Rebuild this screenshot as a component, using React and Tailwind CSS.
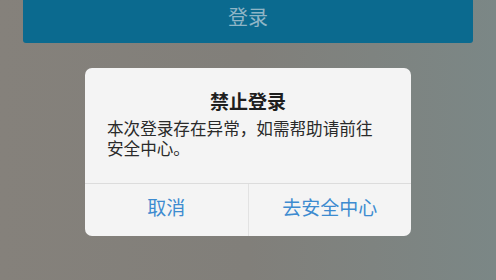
export default function App() {
  return (
    <div
      className="w-[496px] h-[280px] overflow-hidden flex flex-col bg-gradient-to-r from-[#85817b] via-[#817f7a] to-[#7b8786]"
      style={{ fontFamily: '"Noto Sans CJK SC", "Noto Sans", sans-serif' }}
    >
      <div className="px-[23px]">
        <button className="w-full h-[43px] bg-[#0b6a8f] rounded-b-[3px] text-[20px] leading-[20px] text-[#8fb5c6] pb-[16px] flex items-end justify-center">
          登录
        </button>
      </div>

      <div className="mt-[25px] mx-auto w-[326px] h-[168px] bg-[#f4f4f4] rounded-[7px] flex flex-col">
        <div className="pt-[21px] px-[22px] h-[115px]">
          <h2 className="text-center text-[19px] leading-[24px] font-bold text-[#1e1e1e]">禁止登录</h2>
          <p className="mt-[5px] text-[16.6px] leading-[20px] text-[#2a2a2a]">
            本次登录存在异常，如需帮助请前往安全中心。
          </p>
        </div>
        <div className="flex-1 flex border-t border-[#dcdcdc]">
          <button className="flex-1 text-[19px] pb-[5px] text-[#3d8bd0] border-r border-[#e2e2e2]">取消</button>
          <button className="flex-1 text-[19px] pb-[5px] text-[#3d8bd0]">去安全中心</button>
        </div>
      </div>
    </div>
  );
}
